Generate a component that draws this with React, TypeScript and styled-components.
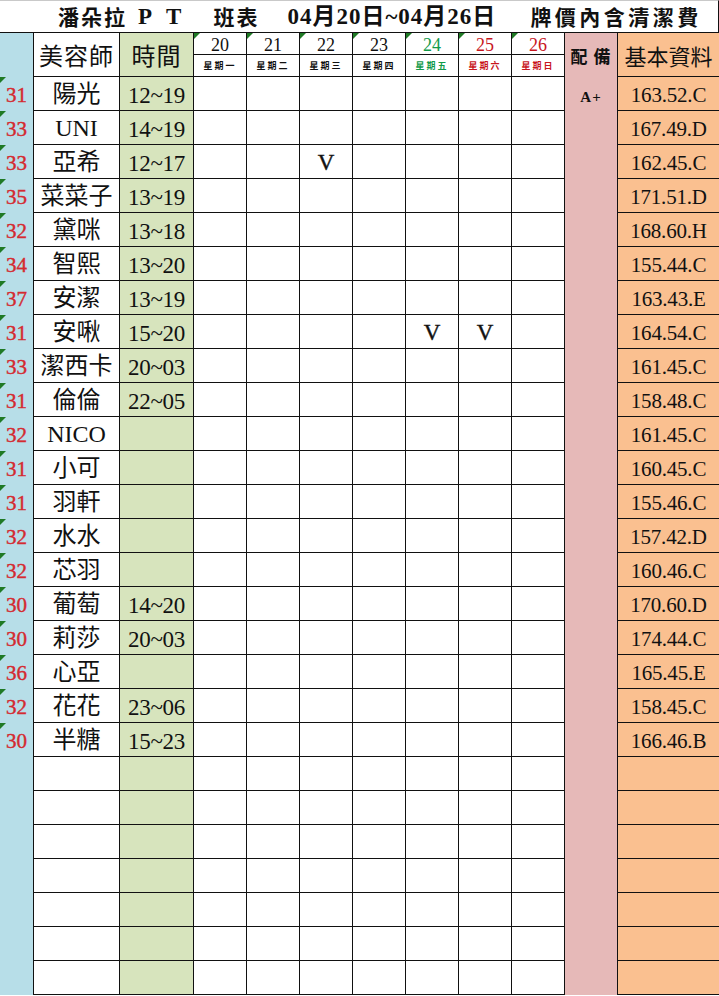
import { FunctionComponent } from 'react';
import styled, { createGlobalStyle, css } from 'styled-components';

const GlobalStyle = createGlobalStyle`
  html, body {
    margin: 0;
    padding: 0;
    background: #ffffff;
  }
  * {
    box-sizing: border-box;
  }
`;

const COLUMNS = '34px 86px 74px repeat(7, 53px) 53px 101px';
const SERIF = `"Liberation Serif", "Noto Sans CJK TC", serif`;
const CJK = `"Noto Sans CJK TC", "Liberation Serif", serif`;

const BLUE = '#b7dee8';
const GREEN = '#d7e4bd';
const PINK = '#e6b9b8';
const ORANGE = '#fac090';
const LINE = '#111';

const Sheet = styled.div`
  width: 719px;
  font-family: ${SERIF};
  color: #111;
`;

const Title = styled.div`
  height: 33px;
  display: flex;
  align-items: center;
  padding-left: 58px;
  border-top: 1px solid #c9c9c9;
  border-right: 1px solid ${LINE};
  border-bottom: 1px solid ${LINE};
  font-weight: 700;
  font-size: 21px;
  white-space: nowrap;
`;

const TitlePart = styled.span<{ $gap?: number; $spacing?: number; $latin?: boolean }>`
  margin-left: ${props => props.$gap ?? 0}px;
  letter-spacing: ${props => props.$spacing ?? 2}px;
  font-family: ${props => (props.$latin ? SERIF : CJK)};
  font-size: ${props => (props.$latin ? 23 : 21)}px;
  line-height: 1;
`;

const Header = styled.div`
  display: grid;
  grid-template-columns: ${COLUMNS};
  grid-template-rows: 22px 22px;
`;

const Row = styled.div`
  display: grid;
  grid-template-columns: ${COLUMNS};
  height: 34px;
`;

const Cell = styled.div<{
  $bg?: string;
  $noBottom?: boolean;
  $flag?: boolean;
  $span?: boolean;
  $last?: boolean;
  $bottom?: boolean;
}>`
  position: relative;
  display: flex;
  align-items: center;
  justify-content: center;
  background: ${props => props.$bg ?? '#ffffff'};
  border-right: ${props => (props.$last ? 'none' : `1px solid ${LINE}`)};
  border-bottom: ${props => (props.$noBottom ? 'none' : `1px solid ${LINE}`)};
  white-space: nowrap;
  line-height: 1;
  ${props =>
    props.$span &&
    css`
      grid-row: span 2;
    `}
  ${props =>
    props.$bottom &&
    css`
      align-items: flex-end;
      padding-bottom: 6px;
    `}
  ${props =>
    props.$flag &&
    css`
      &::before {
        content: '';
        position: absolute;
        top: 0;
        left: 0;
        border-top: 6px solid #1f7a25;
        border-right: 6px solid transparent;
      }
    `}
`;

const HeadLabel = styled.span<{ $size: number; $bold?: boolean; $spacing?: number }>`
  font-family: ${CJK};
  font-size: ${props => props.$size}px;
  font-weight: ${props => (props.$bold ? 700 : 400)};
  letter-spacing: ${props => props.$spacing ?? 0}px;
`;

const DayNumber = styled.span<{ $color: string }>`
  font-size: 18px;
  color: ${props => props.$color};
  padding-top: 2px;
`;

const WeekDay = styled.span<{ $color: string }>`
  font-family: ${CJK};
  font-size: 9px;
  font-weight: 700;
  letter-spacing: 2px;
  color: ${props => props.$color};
`;

const Seq = styled.span`
  font-size: 21px;
  color: #d42a30;
  -webkit-text-stroke: 0.4px #d42a30;
  padding-top: 3px;
`;

const Name = styled.span`
  font-size: 24px;
`;

const Shift = styled.span`
  font-size: 23px;
  letter-spacing: -0.3px;
  padding-top: 3px;
`;

const Mark = styled.span`
  font-size: 23px;
  -webkit-text-stroke: 0.4px #111;
  padding-top: 2px;
`;

const Note = styled.span`
  font-size: 15px;
  font-weight: 700;
  letter-spacing: 1px;
`;

const Stat = styled.span`
  font-size: 21px;
  letter-spacing: -0.2px;
  padding-top: 3px;
`;

type Day = { num: string; week: string; color: string };

const days: Day[] = [
  { num: '20', week: '星期一', color: '#111' },
  { num: '21', week: '星期二', color: '#111' },
  { num: '22', week: '星期三', color: '#111' },
  { num: '23', week: '星期四', color: '#111' },
  { num: '24', week: '星期五', color: '#129a4a' },
  { num: '25', week: '星期六', color: '#c8161d' },
  { num: '26', week: '星期日', color: '#c8161d' },
];

type Staff = {
  seq: string;
  name: string;
  shift: string;
  marks: number[];
  note?: string;
  stat: string;
};

const staff: Staff[] = [
  { seq: '31', name: '陽光', shift: '12~19', marks: [], note: 'A+', stat: '163.52.C' },
  { seq: '33', name: 'UNI', shift: '14~19', marks: [], stat: '167.49.D' },
  { seq: '33', name: '亞希', shift: '12~17', marks: [2], stat: '162.45.C' },
  { seq: '35', name: '菜菜子', shift: '13~19', marks: [], stat: '171.51.D' },
  { seq: '32', name: '黛咪', shift: '13~18', marks: [], stat: '168.60.H' },
  { seq: '34', name: '智熙', shift: '13~20', marks: [], stat: '155.44.C' },
  { seq: '37', name: '安潔', shift: '13~19', marks: [], stat: '163.43.E' },
  { seq: '31', name: '安啾', shift: '15~20', marks: [4, 5], stat: '164.54.C' },
  { seq: '33', name: '潔西卡', shift: '20~03', marks: [], stat: '161.45.C' },
  { seq: '31', name: '倫倫', shift: '22~05', marks: [], stat: '158.48.C' },
  { seq: '32', name: 'NICO', shift: '', marks: [], stat: '161.45.C' },
  { seq: '31', name: '小可', shift: '', marks: [], stat: '160.45.C' },
  { seq: '31', name: '羽軒', shift: '', marks: [], stat: '155.46.C' },
  { seq: '32', name: '水水', shift: '', marks: [], stat: '157.42.D' },
  { seq: '32', name: '芯羽', shift: '', marks: [], stat: '160.46.C' },
  { seq: '30', name: '葡萄', shift: '14~20', marks: [], stat: '170.60.D' },
  { seq: '30', name: '莉莎', shift: '20~03', marks: [], stat: '174.44.C' },
  { seq: '36', name: '心亞', shift: '', marks: [], stat: '165.45.E' },
  { seq: '32', name: '花花', shift: '23~06', marks: [], stat: '158.45.C' },
  { seq: '30', name: '半糖', shift: '15~23', marks: [], stat: '166.46.B' },
];

const EMPTY_ROWS = 7;

const StaffRow: FunctionComponent<{ item?: Staff }> = ({ item }) => (
  <Row>
    <Cell $bg={BLUE} $noBottom $flag={!!item}>
      {item && <Seq>{item.seq}</Seq>}
    </Cell>
    <Cell>{item && <Name>{item.name}</Name>}</Cell>
    <Cell $bg={GREEN}>{item && item.shift && <Shift>{item.shift}</Shift>}</Cell>
    {days.map((day, i) => (
      <Cell key={day.num}>{item && item.marks.includes(i) && <Mark>V</Mark>}</Cell>
    ))}
    <Cell $bg={PINK} $noBottom $bottom={!!item?.note}>
      {item?.note && <Note>{item.note}</Note>}
    </Cell>
    <Cell $bg={ORANGE} $last>
      {item && <Stat>{item.stat}</Stat>}
    </Cell>
  </Row>
);

const App: FunctionComponent = () => {
  return (
    <>
      <GlobalStyle />
      <Sheet>
        <Title>
          <TitlePart $spacing={2}>潘朵拉</TitlePart>
          <TitlePart $gap={11} $latin>
            P
          </TitlePart>
          <TitlePart $gap={12} $latin>
            T
          </TitlePart>
          <TitlePart $gap={30} $spacing={2}>
            班表
          </TitlePart>
          <TitlePart $gap={28} $spacing={1} $latin>
            04月20日~04月26日
          </TitlePart>
          <TitlePart $gap={34} $spacing={3.5}>
            牌價內含清潔費
          </TitlePart>
        </Title>

        <Header>
          <Cell $bg={BLUE} $noBottom $span />
          <Cell $span>
            <HeadLabel $size={24} $spacing={1}>
              美容師
            </HeadLabel>
          </Cell>
          <Cell $bg={GREEN} $span>
            <HeadLabel $size={24} $spacing={1}>
              時間
            </HeadLabel>
          </Cell>
          {days.map(day => (
            <Cell key={day.num} $flag>
              <DayNumber $color={day.color}>{day.num}</DayNumber>
            </Cell>
          ))}
          <Cell $bg={PINK} $noBottom $span>
            <HeadLabel $size={17} $bold $spacing={1}>
              配 備
            </HeadLabel>
          </Cell>
          <Cell $bg={ORANGE} $span $last>
            <HeadLabel $size={22}>基本資料</HeadLabel>
          </Cell>
          {days.map(day => (
            <Cell key={day.week}>
              <WeekDay $color={day.color}>{day.week}</WeekDay>
            </Cell>
          ))}
        </Header>

        {staff.map(item => (
          <StaffRow key={item.name} item={item} />
        ))}
        {Array.from({ length: EMPTY_ROWS }).map((_, i) => (
          <StaffRow key={`empty-${i}`} />
        ))}
      </Sheet>
    </>
  );
};

export default App;
